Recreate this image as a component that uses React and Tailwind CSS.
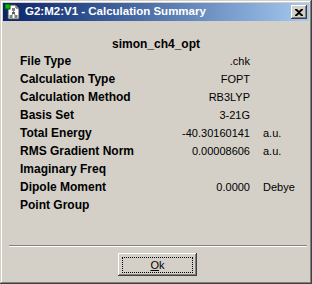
import React from "react";

const rows = [
  ["File Type", ".chk", ""],
  ["Calculation Type", "FOPT", ""],
  ["Calculation Method", "RB3LYP", ""],
  ["Basis Set", "3-21G", ""],
  ["Total Energy", "-40.30160141", "a.u."],
  ["RMS Gradient Norm", "0.00008606", "a.u."],
  ["Imaginary Freq", "", ""],
  ["Dipole Moment", "0.0000", "Debye"],
  ["Point Group", "", ""],
];

function AppIcon() {
  return (
    <svg width="16" height="16" viewBox="0 0 16 16" className="block">
      <path d="M3 1h8l3 3v11H3z" fill="#ffffff" stroke="#404040" strokeWidth="1" />
      <path d="M11 1v3h3" fill="none" stroke="#404040" strokeWidth="1" />
      <rect x="0" y="0" width="5" height="5" fill="#00c000" stroke="#006000" strokeWidth="1" />
      <line x1="8.5" y1="6" x2="8.5" y2="9" stroke="#808080" strokeWidth="1" />
      <line x1="8.5" y1="9" x2="6" y2="12" stroke="#808080" strokeWidth="1" />
      <line x1="8.5" y1="9" x2="11" y2="12" stroke="#808080" strokeWidth="1" />
      <rect x="7" y="4" width="3" height="3" fill="#808080" />
      <rect x="7" y="8" width="3" height="2" fill="#606060" />
      <rect x="4.5" y="11" width="3" height="3" fill="#808080" />
      <rect x="9.5" y="11" width="3" height="3" fill="#808080" />
    </svg>
  );
}

export default function App() {
  return (
    <div
      className="w-[312px] h-[284px] bg-[#d4d0c8] p-[3px] flex flex-col text-black shadow-[inset_-1px_-1px_0_#404040,inset_1px_1px_0_#d4d0c8,inset_-2px_-2px_0_#808080,inset_2px_2px_0_#ffffff]"
      style={{ fontFamily: '"Liberation Sans", Arial, sans-serif' }}
    >
      <div className="h-[18px] flex items-center bg-gradient-to-r from-[#0a246a] to-[#a6caf0] pl-[2px] pr-[2px]">
        <AppIcon />
        <span className="ml-[4px] text-white font-bold text-[11.5px] leading-none whitespace-nowrap">
          G2:M2:V1 - Calculation Summary
        </span>
        <div className="ml-auto w-[16px] h-[14px] bg-[#d4d0c8] flex items-center justify-center shadow-[inset_-1px_-1px_0_#404040,inset_1px_1px_0_#ffffff,inset_-2px_-2px_0_#808080]">
          <svg width="8" height="7" viewBox="0 0 8 7" className="block">
            <path d="M0 0h2l2 2 2-2h2v1L5 3.5 8 6v1H6L4 5 2 7H0V6l3-2.5L0 1z" fill="#000" />
          </svg>
        </div>
      </div>

      <div className="mt-[15px] h-[16px] flex items-center justify-center text-[12px] font-bold leading-none">
        simon_ch4_opt
      </div>

      <div className="flex flex-col">
        {rows.map(([label, value, unit]) => (
          <div key={label} className="h-[18px] flex items-center pl-[17px] text-[11px] leading-none">
            <div className="w-[140px] font-bold text-[12px] whitespace-nowrap">{label}</div>
            <div className="w-[90px] text-right whitespace-nowrap">{value}</div>
            <div className="ml-[13px] whitespace-nowrap">{unit}</div>
          </div>
        ))}
      </div>

      <div className="mt-auto pb-[5px]">
        <div className="ml-[6px] mr-[2px] h-[2px] border-t border-t-[#808080] border-b border-b-white" />
        <div className="mt-[6px] ml-[115px] w-[79px] h-[23px] bg-[#d4d0c8] flex items-start pt-[4px] pl-[4px] shadow-[inset_-1px_-1px_0_#404040,inset_1px_1px_0_#ffffff,inset_-2px_-2px_0_#808080]">
          <div className="w-[71px] h-[16px] border border-dotted border-black flex items-center justify-center text-[11px] leading-none">
            <span>
              <span className="underline">O</span>k
            </span>
          </div>
        </div>
      </div>
    </div>
  );
}
